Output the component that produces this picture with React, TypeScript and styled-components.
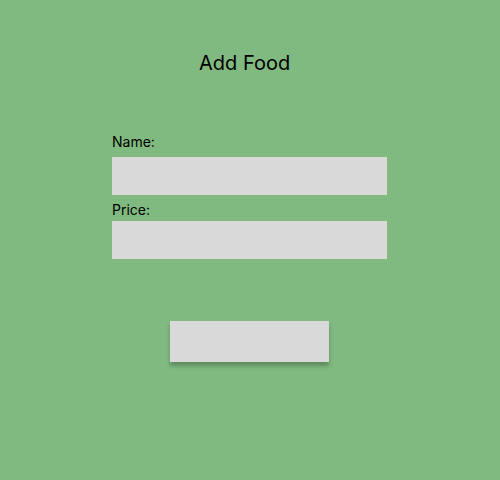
import React from "react";
import styled, { createGlobalStyle } from "styled-components";

const Global = createGlobalStyle`
  html, body { margin: 0; padding: 0; }
  body { font-family: Inter, "Noto Sans", sans-serif; }
`;

const Page = styled.div`
  width: 500px;
  height: 480px;
  background: #80ba80;
  display: flex;
  flex-direction: column;
  align-items: flex-start;
  box-sizing: border-box;
  padding-top: 51px;
`;

const Title = styled.h1`
  margin: 0 0 0 199px;
  font-size: 20px;
  font-weight: 400;
  line-height: 24px;
  color: #000;
`;

const Form = styled.form`
  display: flex;
  flex-direction: column;
  margin: 58px 0 0 112px;
  width: 275px;
`;

const Label = styled.label<{ $gap: number }>`
  font-size: 14px;
  line-height: 17px;
  color: #000;
  margin-bottom: ${(p) => p.$gap}px;
`;

const Input = styled.input`
  width: 275px;
  height: 38px;
  box-sizing: border-box;
  border: none;
  background: #d9d9d9;
  margin-bottom: 6px;
  outline: none;
`;

const Submit = styled.button`
  width: 159px;
  height: 41px;
  border: none;
  background: #d9d9d9;
  box-shadow: 0 4px 4px rgba(0, 0, 0, 0.25);
  margin: 56px 0 0 58px;
  padding: 0;
`;

export default function App() {
  return (
    <>
      <Global />
      <Page>
        <Title>Add Food</Title>
        <Form onSubmit={(e) => e.preventDefault()}>
          <Label $gap={7}>Name:</Label>
          <Input type="text" />
          <Label $gap={3}>Price:</Label>
          <Input type="text" />
          <Submit type="submit" />
        </Form>
      </Page>
    </>
  );
}
